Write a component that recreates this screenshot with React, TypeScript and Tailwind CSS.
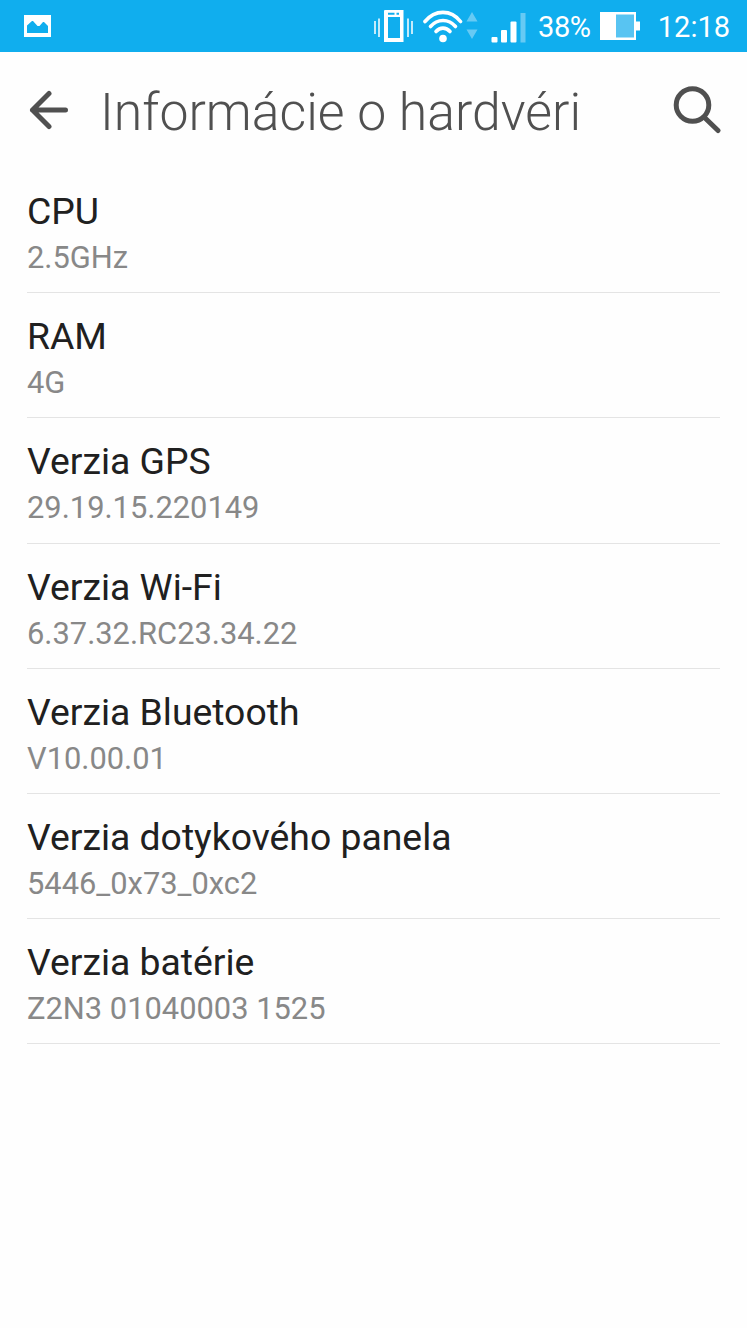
const hardware = [
  { label: "CPU", value: "2.5GHz" },
  { label: "RAM", value: "4G" },
  { label: "Verzia GPS", value: "29.19.15.220149" },
  { label: "Verzia Wi-Fi", value: "6.37.32.RC23.34.22" },
  { label: "Verzia Bluetooth", value: "V10.00.01" },
  { label: "Verzia dotykového panela", value: "5446_0x73_0xc2" },
  { label: "Verzia batérie", value: "Z2N3 01040003 1525" },
];

const PictureIcon = () => (
  <svg width="27" height="22" viewBox="0 0 27 22">
    <rect width="27" height="22" fill="#fff" />
    <path fill="#10aeee" d="M3 18h21v-7l-4-4h-1l-3.500 4h-2L9 6H8l-5 4.500z" />
  </svg>
);

const VibrateIcon = () => (
  <svg width="40" height="34" viewBox="0 0 40 34">
    <path
      fill="#fff"
      fillRule="evenodd"
      d="M11 1h18.500v32H10V2a1 1 0 0 1 1-1zM14 8v21h12V8zM14 3.800v1.900h6.500V3.800zM22.500 3.800v1.900H25V3.800z"
    />
    <path
      stroke="#fff"
      strokeWidth="1.500"
      d="M1 12v13M5 9.500v18.500M34 9.500v18.500M38 12v13"
    />
  </svg>
);

const WifiIcon = () => (
  <svg width="40" height="34" viewBox="0 0 40 34" fill="none">
    <g stroke="#fff" strokeWidth="3.600" strokeLinecap="round">
      <path d="M2 12.500C12 .3 28 .3 37.500 12.500" />
      <path d="M7.500 17.500c7-8 18-8 25 0" />
      <path d="M13 22.500c4-4.500 10-4.500 14 0" />
    </g>
    <circle cx="20" cy="29.500" r="3.800" fill="#fff" />
  </svg>
);

const TrafficIcon = () => (
  <svg width="12" height="28" viewBox="0 0 12 28" fill="#66caf4">
    <path d="M6 0l5.500 9.500H.5zM6 27L.5 17.500h11z" />
  </svg>
);

const SignalIcon = () => (
  <svg width="36" height="32" viewBox="0 0 36 32" fill="#fff">
    <rect x="0.500" y="25" width="6" height="5.500" rx="1" />
    <rect x="10" y="18" width="6" height="12.500" rx="1" />
    <rect x="19.500" y="9.500" width="6" height="21" rx="1" />
    <rect x="29.500" y="1" width="5" height="29.500" fill="#66caf4" />
  </svg>
);

const BatteryIcon = () => (
  <svg width="41" height="28" viewBox="0 0 41 28">
    <path fill="#fff" d="M0 0h36v9.500h4v9h-4V28H0z" />
    <path fill="#58c4f2" d="M16 2.500h18v23H16z" />
  </svg>
);

const StatusBar = () => (
  <div className="flex h-[52px] items-center bg-[#10aeee] pr-[17px] pl-6 text-white">
    <PictureIcon />
    <div className="ml-auto flex items-center">
      <VibrateIcon />
      <div className="ml-[9px]">
        <WifiIcon />
      </div>
      <div className="ml-[3px]">
        <TrafficIcon />
      </div>
      <div className="mt-1 ml-[13px]">
        <SignalIcon />
      </div>
      <span className="mt-0.5 ml-[11px] w-[62px] text-[29px] leading-[34px] tracking-[-0.400px]">
        38%
      </span>
      <BatteryIcon />
      <span className="mt-0.5 ml-4 w-[73px] text-right text-[29px] leading-[34px]">
        12:18
      </span>
    </div>
  </div>
);

const BackIcon = () => (
  <svg width="40" height="40" viewBox="0 0 40 40" fill="none">
    <path
      d="M36.500 20H3.500M20 3.500L3.500 20L20 36.500"
      stroke="#505050"
      strokeWidth="5"
      strokeLinecap="round"
      strokeLinejoin="round"
    />
  </svg>
);

const SearchIcon = () => (
  <svg width="48" height="48" viewBox="0 0 48 48" fill="none" stroke="#505050">
    <circle cx="19.500" cy="19" r="16.300" strokeWidth="5" />
    <path d="M31.500 31.500L45 44.500" strokeWidth="5" strokeLinecap="round" />
  </svg>
);

const Header = () => (
  <div className="flex h-[115px] items-center pr-[26px] pl-[29px]">
    <button aria-label="Späť">
      <BackIcon />
    </button>
    <h1 className="mt-1.5 ml-[31px] text-[51.750px] leading-[61px] font-light whitespace-nowrap text-[#505050]">
      Informácie o hardvéri
    </h1>
    <button className="ml-auto" aria-label="Hľadať">
      <SearchIcon />
    </button>
  </div>
);

const App = () => {
  return (
    <div className="min-h-screen bg-[#fefefe] font-['Roboto',sans-serif]">
      <StatusBar />
      <Header />

      <ul className="px-[27px] pt-px">
        {hardware.map((item) => (
          <li
            key={item.label}
            className="h-[125.200px] border-b-[1.500px] border-[#e4e4e4] pt-[21px]"
          >
            <h2 className="text-[37.350px] leading-[44px] text-[#202020]">
              {item.label}
            </h2>
            <p className="mt-[7px] text-[30.850px] leading-9 text-[#888888]">
              {item.value}
            </p>
          </li>
        ))}
      </ul>
    </div>
  );
};

export default App;
